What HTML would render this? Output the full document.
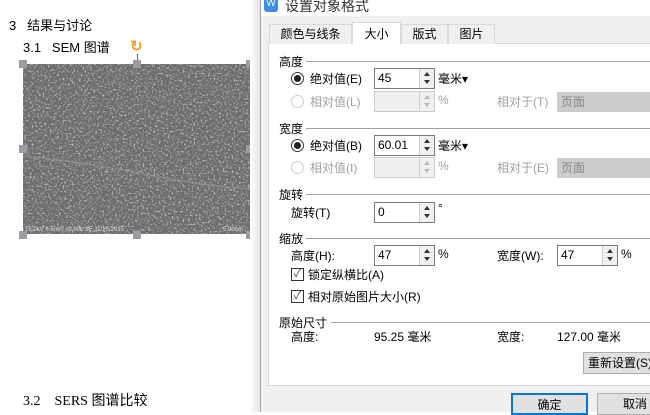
<!DOCTYPE html>
<html><head><meta charset="utf-8"><style>
*{margin:0;padding:0;box-sizing:border-box}
body{width:650px;height:412px;overflow:hidden;background:#fff;position:relative;font-family:"Liberation Sans","Noto Sans CJK SC",sans-serif;font-size:12px;color:#000}
.a{position:absolute;white-space:nowrap}
.doc{font-size:13px}
.img{position:absolute;left:23px;top:64px;width:227px;height:170px;background:#727272;overflow:hidden}
.h{position:absolute;width:8px;height:8px;background:#9a9ca2}
.dlg{position:absolute;left:260px;top:0;width:390px;height:412px;background:#f0f0f0;border-left:1px solid #a8a8a8}
.sh{position:absolute;left:250px;top:0;width:10px;height:412px;background:linear-gradient(90deg,#fff,#e4e4e4)}
.tab{position:absolute;top:24px;height:20px;border:1px solid #d9d9d9;border-bottom:none;background:#f0f0f0;text-align:center;line-height:19px;font-size:12px}
.panel{position:absolute;left:268px;top:43px;width:390px;height:343px;background:#fff;border:1px solid #d9d9d9}
.sec{position:absolute;left:279px;font-size:12px}
.line{position:absolute;height:1px;background:#a0a0a0}
.rad{position:absolute;width:13px;height:13px;border-radius:50%;border:1px solid #333;background:#fff}
.rad.on::after{content:"";position:absolute;left:2px;top:2px;width:7px;height:7px;border-radius:50%;background:#222}
.rad.dis{border-color:#ccc}
.inp{position:absolute;width:61px;height:21px;border:1px solid #7a7a7a;background:#fff;font-size:12px;line-height:19px;padding-left:3px}
.inp.dis{border-color:#ccc;background:#f0f0f0}
.sp{position:absolute;right:0;top:0;width:15px;height:19px;border-left:1px solid #ccc;background:#f0f0f0}
.sp::before{content:"";position:absolute;left:4px;top:3px;border:3px solid transparent;border-bottom:4px solid #333;border-top:none}
.sp::after{content:"";position:absolute;left:4px;top:11px;border:3px solid transparent;border-top:4px solid #333;border-bottom:none}
.dis .sp::before{border-bottom-color:#bbb}.dis .sp::after{border-top-color:#bbb}
.g{color:#a0a0a0}
.sel{position:absolute;left:557px;width:100px;height:20px;background:#ccc;border:1px solid #ccc;color:#888;padding-left:3px;line-height:18px}
.cb{position:absolute;width:13px;height:13px;border:1px solid #333;background:#fff;font-size:11px;line-height:11px;text-align:center;color:#444}
.btn{position:absolute;height:22px;border:1px solid #adadad;background:#e1e1e1;text-align:center;line-height:20px}
</style></head><body>
<div class="a doc" style="left:9px;top:15px">3&nbsp;&nbsp;&nbsp;结果与讨论</div>
<div class="a doc" style="left:23px;top:37px">3.1&nbsp;&nbsp;&nbsp;SEM 图谱</div>
<div class="a" style="left:130px;top:37px;color:#f0a020;font-size:15px;font-weight:bold">↻</div>
<div class="a" style="left:137px;top:54px;width:1px;height:8px;background:#666"></div>
<div class="img"><svg width="227" height="170"><filter id="n"><feTurbulence type="fractalNoise" baseFrequency="0.55" numOctaves="1" seed="3"/><feColorMatrix values="0 0 0 0 1 0 0 0 0 1 0 0 0 0 1 0 0 0 4 -2.1"/></filter><rect width="227" height="170" fill="#6e6e6e"/><rect width="227" height="170" filter="url(#n)" opacity="0.6"/><path d="M0 92 Q60 98 120 110 T227 125" stroke="#a0a0a0" stroke-width="2" fill="none" opacity=".4"/><text x="2" y="167" font-size="6" fill="#ddd" font-family="Liberation Sans">15.0kV 6.5mm x9.00k SE  11/15/2015</text><text x="200" y="167" font-size="6" fill="#ddd" font-family="Liberation Sans">5.00um</text></svg></div>
<div class="h" style="left:19px;top:60px"></div><div class="h" style="left:133px;top:60px"></div><div class="h" style="left:246px;top:60px"></div>
<div class="h" style="left:19px;top:145px"></div><div class="h" style="left:246px;top:145px"></div>
<div class="h" style="left:19px;top:231px"></div><div class="h" style="left:133px;top:231px"></div><div class="h" style="left:246px;top:231px"></div>
<div class="a doc" style="left:23px;top:390px;font-family:'Liberation Serif','Noto Sans CJK SC',serif;font-size:14px">3.2&nbsp;&nbsp;&nbsp;&nbsp;SERS 图谱比较</div>
<div class="sh"></div>
<div class="dlg"></div>
<div class="a" style="left:261px;top:0;width:389px;height:16px;background:#fff"></div>
<div class="a" style="left:264px;top:-4px;width:14px;height:16px;background:#3c8ee8;border-radius:3px;color:#fff;font-size:10px;text-align:center;line-height:16px">W</div>
<div class="a" style="left:285px;top:-4px;font-size:14px;color:#333">设置对象格式</div>
<div class="panel"></div>
<div class="tab" style="left:269px;width:83px">颜色与线条</div>
<div class="tab" style="left:352px;top:22px;height:22px;width:49px;background:#fff;line-height:22px">大小</div>
<div class="tab" style="left:401px;width:47px">版式</div>
<div class="tab" style="left:448px;width:47px">图片</div>

<div class="sec" style="top:53px">高度</div><div class="line" style="left:306px;top:61px;width:350px"></div>
<div class="rad on" style="left:291px;top:72px"></div><div class="a" style="left:310px;top:70px">绝对值(E)</div>
<div class="inp" style="left:374px;top:68px">45<div class="sp"></div></div><div class="a" style="left:438px;top:70px">毫米▾</div>
<div class="rad dis" style="left:291px;top:95px"></div><div class="a g" style="left:310px;top:93px">相对值(L)</div>
<div class="inp dis" style="left:374px;top:91px"><div class="sp"></div></div><div class="a g" style="left:438px;top:93px">%</div>
<div class="a g" style="left:497px;top:93px">相对于(T)</div><div class="sel" style="top:92px">页面</div>

<div class="sec" style="top:120px">宽度</div><div class="line" style="left:306px;top:128px;width:350px"></div>
<div class="rad on" style="left:291px;top:139px"></div><div class="a" style="left:310px;top:137px">绝对值(B)</div>
<div class="inp" style="left:374px;top:135px">60.01<div class="sp"></div></div><div class="a" style="left:438px;top:137px">毫米▾</div>
<div class="rad dis" style="left:291px;top:161px"></div><div class="a g" style="left:310px;top:159px">相对值(I)</div>
<div class="inp dis" style="left:374px;top:157px"><div class="sp"></div></div><div class="a g" style="left:438px;top:159px">%</div>
<div class="a g" style="left:497px;top:159px">相对于(E)</div><div class="sel" style="top:158px">页面</div>

<div class="sec" style="top:186px">旋转</div><div class="line" style="left:306px;top:194px;width:350px"></div>
<div class="a" style="left:291px;top:204px">旋转(T)</div>
<div class="inp" style="left:374px;top:202px">0<div class="sp"></div></div><div class="a" style="left:438px;top:201px">°</div>

<div class="sec" style="top:230px">缩放</div><div class="line" style="left:306px;top:238px;width:350px"></div>
<div class="a" style="left:291px;top:247px">高度(H):</div>
<div class="inp" style="left:374px;top:245px">47<div class="sp"></div></div><div class="a" style="left:438px;top:247px">%</div>
<div class="a" style="left:497px;top:247px">宽度(W):</div>
<div class="inp" style="left:557px;top:245px">47<div class="sp"></div></div><div class="a" style="left:621px;top:247px">%</div>
<div class="cb" style="left:291px;top:268px">✓</div><div class="a" style="left:308px;top:266px">锁定纵横比(A)</div>
<div class="cb" style="left:291px;top:290px">✓</div><div class="a" style="left:308px;top:288px">相对原始图片大小(R)</div>

<div class="sec" style="top:314px">原始尺寸</div><div class="line" style="left:331px;top:322px;width:325px"></div>
<div class="a" style="left:291px;top:328px">高度:</div><div class="a" style="left:374px;top:328px">95.25 毫米</div>
<div class="a" style="left:497px;top:328px">宽度:</div><div class="a" style="left:557px;top:328px">127.00 毫米</div>
<div class="btn" style="left:583px;top:352px;width:80px;text-align:left;padding-left:4px">重新设置(S)</div>
<div class="btn" style="left:511px;top:393px;width:77px;border:2px solid #0078d7">确定</div>
<div class="btn" style="left:597px;top:393px;width:77px;text-align:left;padding-left:25px">取消</div>
</body></html>
